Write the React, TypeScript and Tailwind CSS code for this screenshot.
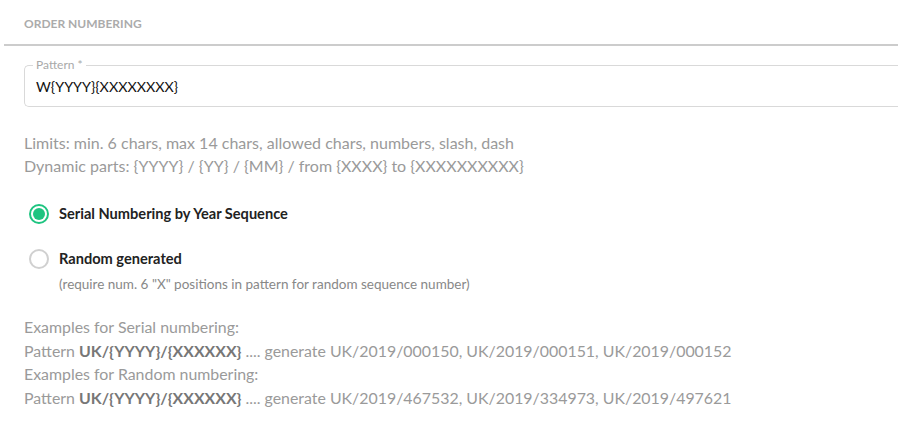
import React from "react";

export default function App() {
  return (
    <div
      className="w-[898px] h-[424px] bg-white overflow-hidden"
      style={{ fontFamily: "Lato, 'Open Sans', sans-serif" }}
    >
      <div className="pl-[24px] pt-[16px] h-[44px] text-[12px] font-bold text-[#ababab] leading-[15px]">
        ORDER NUMBERING
      </div>
      <div className="ml-[4px] h-[2px] bg-[#cccccc]" />
      <div className="pl-[24px] pt-[19px]">
        <div className="relative h-[42px] border border-[#d9d9d9] border-r-0 rounded-l-[5px] flex items-center pl-[11px]">
          <span className="absolute left-[8px] top-[-8px] bg-white px-[3px] text-[12px] leading-[14px] text-[#a9a9a9]">
            Pattern *
          </span>
          <span className="text-[14.3px] text-[#111] pt-[2px]">W{"{YYYY}{XXXXXXXX}"}</span>
        </div>
      </div>
      <div className="pl-[24px] pt-[24px] text-[16px] leading-[23px] text-[#9a9a9a]">
        <div>Limits: min. 6 chars, max 14 chars, allowed chars, numbers, slash, dash</div>
        <div>Dynamic parts: {"{YYYY} / {YY} / {MM} / from {XXXX} to {XXXXXXXXXX}"}</div>
      </div>
      <div className="pl-[29px] pt-[26px]">
        <div className="flex items-center gap-[10px] h-[22px]">
          <span className="w-[20px] h-[20px] rounded-full border-2 border-[#1ec480] flex items-center justify-center">
            <span className="w-[12px] h-[12px] rounded-full bg-[#1ec480]" />
          </span>
          <span className="text-[14.6px] font-bold text-[#222]">Serial Numbering by Year Sequence</span>
        </div>
        <div className="flex items-center gap-[10px] h-[22px] mt-[23px]">
          <span className="w-[20px] h-[20px] rounded-full border-2 border-[#d0d0d0]" />
          <span className="text-[14.6px] font-bold text-[#222]">Random generated</span>
        </div>
        <div className="pl-[30px] pt-[6px] text-[13.5px] leading-[16px] text-[#888]">
          (require num. 6 "X" positions in pattern for random sequence number)
        </div>
      </div>
      <div className="pl-[24px] pt-[23px] text-[15.9px] leading-[23.5px] text-[#9a9a9a]">
        <div>Examples for Serial numbering:</div>
        <div>
          Pattern <b className="text-[#777]">{"UK/{YYYY}/{XXXXXX}"}</b> .... generate UK/2019/000150, UK/2019/000151, UK/2019/000152
        </div>
        <div>Examples for Random numbering:</div>
        <div>
          Pattern <b className="text-[#777]">{"UK/{YYYY}/{XXXXXX}"}</b> .... generate UK/2019/467532, UK/2019/334973, UK/2019/497621
        </div>
      </div>
    </div>
  );
}
